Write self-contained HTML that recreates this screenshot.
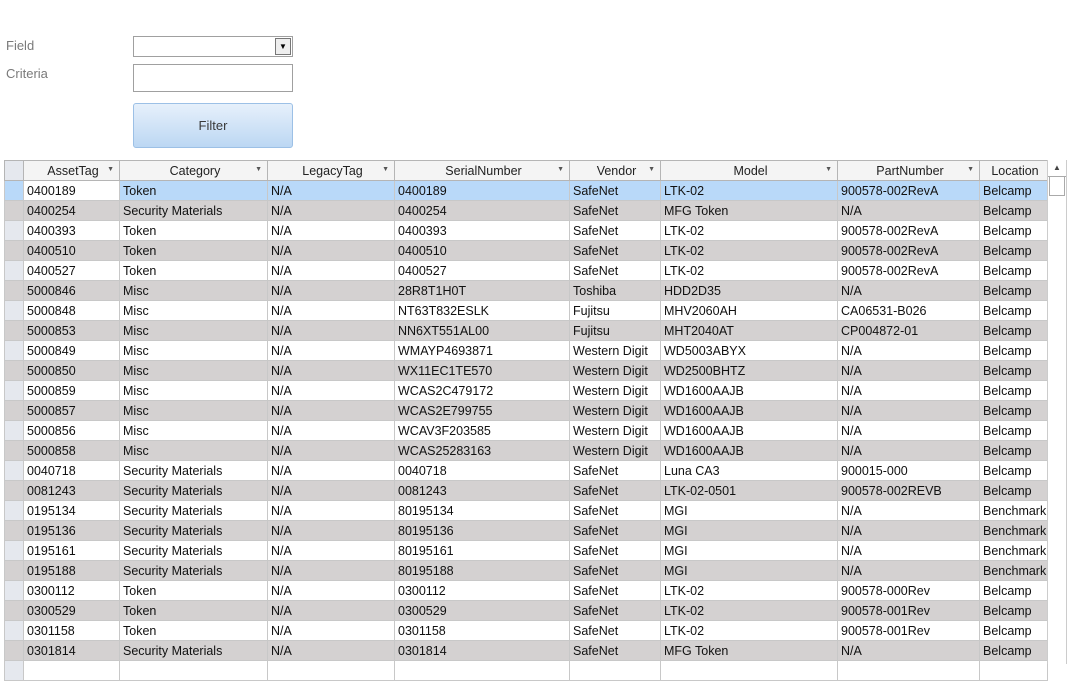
<!DOCTYPE html>
<html><head><meta charset="utf-8"><style>
body{margin:0;width:1075px;height:664px;overflow:hidden;background:#fff;font-family:"Liberation Sans",sans-serif;position:relative}
.lbl{position:absolute;left:6px;font-size:13px;color:#7a7a7a}
.box{position:absolute;left:133px;width:158px;border:1px solid #a0a0a0;background:#fff}
.btn{position:absolute;left:133px;top:103px;width:158px;height:43px;border:1px solid #9cc0e6;border-radius:3px;background:linear-gradient(#e6f0fb,#bcd7f3);font-size:13px;color:#3a3a3a;text-align:center;line-height:43px}
table{position:absolute;left:4px;top:160px;border-collapse:collapse;table-layout:fixed;font-size:12.5px;color:#111}
td,th{height:19px;padding:0 0 0 3px;border:1px solid #c8c8c8;white-space:nowrap;overflow:hidden;text-align:left}
th{font-weight:normal;background:#f4f4f4;text-align:center;position:relative;color:#222;border-color:#b5b5b5}
th span{position:absolute;right:5px;top:5px;font-size:7px;color:#555}
td.s,th.s{background:#e5e8ee;padding:0}
tr.g td{background:#d4d1d1}
tr.h td{background:#b9d9f9}
tr.h td.f{background:#fff}
.sb{position:absolute;left:1047px;top:160px;width:18px;height:504px;background:#fff;border-left:1px solid #ccc;border-right:1px solid #ccc}
</style></head><body>
<div class="lbl" style="top:38px">Field</div>
<div class="lbl" style="top:66px">Criteria</div>
<div class="box" style="top:36px;height:19px"><div style="position:absolute;right:1px;top:1px;width:14px;height:15px;border:1px solid #777;background:#eee;font-size:8px;text-align:center;line-height:16px">▼</div></div>
<div class="box" style="top:64px;height:26px"></div>
<div class="btn">Filter</div>
<table>
<colgroup><col style="width:19px"><col style="width:96px"><col style="width:148px"><col style="width:127px"><col style="width:175px"><col style="width:91px"><col style="width:177px"><col style="width:142px"><col style="width:68px"></colgroup>
<tr><th class="s"></th><th>AssetTag<span>▼</span></th><th>Category<span>▼</span></th><th>LegacyTag<span>▼</span></th><th>SerialNumber<span>▼</span></th><th>Vendor<span>▼</span></th><th>Model<span>▼</span></th><th>PartNumber<span>▼</span></th><th>Location</th></tr>
<tr class="h"><td class="s"></td><td class="f">0400189</td><td>Token</td><td>N/A</td><td>0400189</td><td>SafeNet</td><td>LTK-02</td><td>900578-002RevA</td><td>Belcamp</td></tr>
<tr class="g"><td class="s"></td><td>0400254</td><td>Security Materials</td><td>N/A</td><td>0400254</td><td>SafeNet</td><td>MFG Token</td><td>N/A</td><td>Belcamp</td></tr>
<tr><td class="s"></td><td>0400393</td><td>Token</td><td>N/A</td><td>0400393</td><td>SafeNet</td><td>LTK-02</td><td>900578-002RevA</td><td>Belcamp</td></tr>
<tr class="g"><td class="s"></td><td>0400510</td><td>Token</td><td>N/A</td><td>0400510</td><td>SafeNet</td><td>LTK-02</td><td>900578-002RevA</td><td>Belcamp</td></tr>
<tr><td class="s"></td><td>0400527</td><td>Token</td><td>N/A</td><td>0400527</td><td>SafeNet</td><td>LTK-02</td><td>900578-002RevA</td><td>Belcamp</td></tr>
<tr class="g"><td class="s"></td><td>5000846</td><td>Misc</td><td>N/A</td><td>28R8T1H0T</td><td>Toshiba</td><td>HDD2D35</td><td>N/A</td><td>Belcamp</td></tr>
<tr><td class="s"></td><td>5000848</td><td>Misc</td><td>N/A</td><td>NT63T832ESLK</td><td>Fujitsu</td><td>MHV2060AH</td><td>CA06531-B026</td><td>Belcamp</td></tr>
<tr class="g"><td class="s"></td><td>5000853</td><td>Misc</td><td>N/A</td><td>NN6XT551AL00</td><td>Fujitsu</td><td>MHT2040AT</td><td>CP004872-01</td><td>Belcamp</td></tr>
<tr><td class="s"></td><td>5000849</td><td>Misc</td><td>N/A</td><td>WMAYP4693871</td><td>Western Digit</td><td>WD5003ABYX</td><td>N/A</td><td>Belcamp</td></tr>
<tr class="g"><td class="s"></td><td>5000850</td><td>Misc</td><td>N/A</td><td>WX11EC1TE570</td><td>Western Digit</td><td>WD2500BHTZ</td><td>N/A</td><td>Belcamp</td></tr>
<tr><td class="s"></td><td>5000859</td><td>Misc</td><td>N/A</td><td>WCAS2C479172</td><td>Western Digit</td><td>WD1600AAJB</td><td>N/A</td><td>Belcamp</td></tr>
<tr class="g"><td class="s"></td><td>5000857</td><td>Misc</td><td>N/A</td><td>WCAS2E799755</td><td>Western Digit</td><td>WD1600AAJB</td><td>N/A</td><td>Belcamp</td></tr>
<tr><td class="s"></td><td>5000856</td><td>Misc</td><td>N/A</td><td>WCAV3F203585</td><td>Western Digit</td><td>WD1600AAJB</td><td>N/A</td><td>Belcamp</td></tr>
<tr class="g"><td class="s"></td><td>5000858</td><td>Misc</td><td>N/A</td><td>WCAS25283163</td><td>Western Digit</td><td>WD1600AAJB</td><td>N/A</td><td>Belcamp</td></tr>
<tr><td class="s"></td><td>0040718</td><td>Security Materials</td><td>N/A</td><td>0040718</td><td>SafeNet</td><td>Luna CA3</td><td>900015-000</td><td>Belcamp</td></tr>
<tr class="g"><td class="s"></td><td>0081243</td><td>Security Materials</td><td>N/A</td><td>0081243</td><td>SafeNet</td><td>LTK-02-0501</td><td>900578-002REVB</td><td>Belcamp</td></tr>
<tr><td class="s"></td><td>0195134</td><td>Security Materials</td><td>N/A</td><td>80195134</td><td>SafeNet</td><td>MGI</td><td>N/A</td><td>Benchmark</td></tr>
<tr class="g"><td class="s"></td><td>0195136</td><td>Security Materials</td><td>N/A</td><td>80195136</td><td>SafeNet</td><td>MGI</td><td>N/A</td><td>Benchmark</td></tr>
<tr><td class="s"></td><td>0195161</td><td>Security Materials</td><td>N/A</td><td>80195161</td><td>SafeNet</td><td>MGI</td><td>N/A</td><td>Benchmark</td></tr>
<tr class="g"><td class="s"></td><td>0195188</td><td>Security Materials</td><td>N/A</td><td>80195188</td><td>SafeNet</td><td>MGI</td><td>N/A</td><td>Benchmark</td></tr>
<tr><td class="s"></td><td>0300112</td><td>Token</td><td>N/A</td><td>0300112</td><td>SafeNet</td><td>LTK-02</td><td>900578-000Rev</td><td>Belcamp</td></tr>
<tr class="g"><td class="s"></td><td>0300529</td><td>Token</td><td>N/A</td><td>0300529</td><td>SafeNet</td><td>LTK-02</td><td>900578-001Rev</td><td>Belcamp</td></tr>
<tr><td class="s"></td><td>0301158</td><td>Token</td><td>N/A</td><td>0301158</td><td>SafeNet</td><td>LTK-02</td><td>900578-001Rev</td><td>Belcamp</td></tr>
<tr class="g"><td class="s"></td><td>0301814</td><td>Security Materials</td><td>N/A</td><td>0301814</td><td>SafeNet</td><td>MFG Token</td><td>N/A</td><td>Belcamp</td></tr>
<tr><td class="s"></td><td></td><td></td><td></td><td></td><td></td><td></td><td></td><td></td></tr>
</table>
<div class="sb"><div style="height:16px;border-bottom:1px solid #aaa;font-size:8px;text-align:center;line-height:16px;color:#444">▲</div><div style="height:18px;border-bottom:1px solid #aaa;margin:0 1px;border-left:1px solid #aaa;border-right:1px solid #aaa"></div></div>
</body></html>
